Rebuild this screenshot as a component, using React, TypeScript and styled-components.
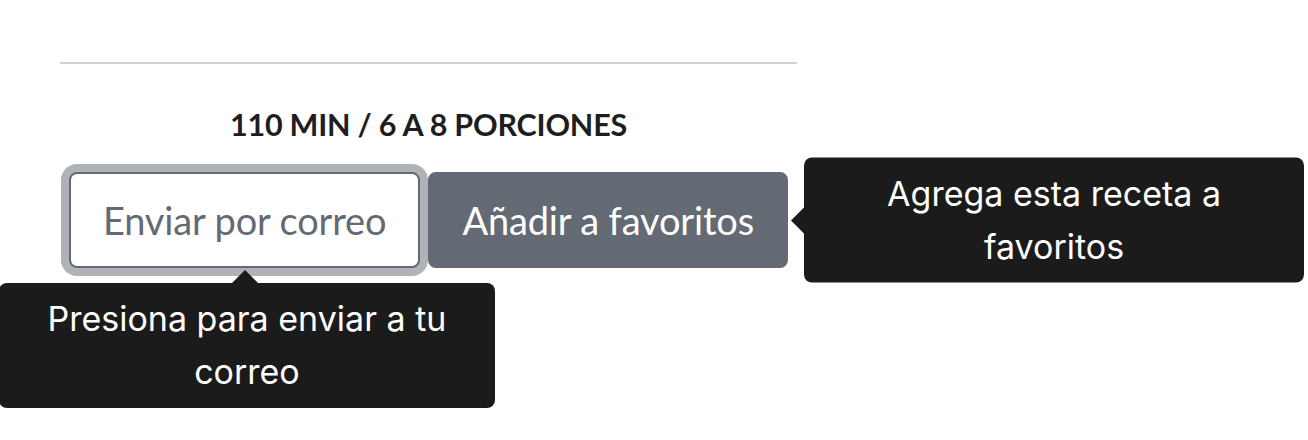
import React from "react";
import styled, { createGlobalStyle } from "styled-components";

const GlobalStyle = createGlobalStyle`
  body {
    margin: 0;
    background: #ffffff;
    font-family: "Lato", "Open Sans", sans-serif;
  }
`;

const Page = styled.div`
  box-sizing: border-box;
  width: 737px;
  min-height: 440px;
  margin-left: 60px;
  padding-top: 62px;
`;

const Divider = styled.hr`
  margin: 0;
  border: 0;
  border-top: 2px solid #d2d2d2;
`;

const Meta = styled.h2`
  margin: 40px 0 0;
  font-family: "Lato", sans-serif;
  font-weight: 700;
  font-size: 30.5px;
  line-height: 40px;
  text-align: center;
  color: #1e1e1e;
  letter-spacing: -0.2px;
`;

const ButtonRow = styled.div`
  display: flex;
  justify-content: center;
  gap: 8px;
  margin-top: 28px;
`;

const ButtonWrap = styled.div`
  position: relative;
  display: flex;
`;

const Button = styled.button<{ variant: "outline" | "solid"; focused?: boolean }>`
  height: 96px;
  padding: 0 32px;
  border-radius: 8px;
  border: 2px solid #646a73;
  font-family: "Lato", sans-serif;
  font-size: 38px;
  line-height: 1;
  letter-spacing: -0.15px;
  cursor: pointer;
  background: ${(p) => (p.variant === "solid" ? "#646a73" : "#ffffff")};
  color: ${(p) => (p.variant === "solid" ? "#ffffff" : "#646a73")};
  box-shadow: ${(p) => (p.focused ? "0 0 0 8px #afb2b7" : "none")};
`;

const Tooltip = styled.div<{ placement: "right" | "bottom" }>`
  position: absolute;
  z-index: 10;
  box-sizing: border-box;
  width: ${(p) => (p.placement === "right" ? "500px" : "496px")};
  padding: 10px 16px;
  background: #1b1b1b;
  color: #ffffff;
  border-radius: 8px;
  font-family: "Inter", "Noto Sans", sans-serif;
  font-size: 34px;
  line-height: 52.5px;
  text-align: center;
  ${(p) =>
    p.placement === "right"
      ? `
    left: calc(100% + 16px);
    top: 50%;
    transform: translateY(-50%);
  `
      : `
    top: calc(100% + 15px);
    left: -70px;
  `}

  &::before {
    content: "";
    position: absolute;
    width: 0;
    height: 0;
    ${(p) =>
      p.placement === "right"
        ? `
      left: -13px;
      top: 50%;
      margin-top: -13px;
      border-top: 13px solid transparent;
      border-bottom: 13px solid transparent;
      border-right: 13px solid #1b1b1b;
    `
        : `
      top: -13px;
      left: 246px;
      margin-left: -13px;
      border-left: 13px solid transparent;
      border-right: 13px solid transparent;
      border-bottom: 13px solid #1b1b1b;
    `}
  }
`;

export default function App() {
  return (
    <>
      <GlobalStyle />
      <Page>
        <Divider />
        <Meta>110 MIN / 6 A 8 PORCIONES</Meta>
        <ButtonRow>
          <ButtonWrap>
            <Button variant="outline" focused>
              Enviar por correo
            </Button>
            <Tooltip placement="bottom">Presiona para enviar a tu correo</Tooltip>
          </ButtonWrap>
          <ButtonWrap>
            <Button variant="solid">Añadir a favoritos</Button>
            <Tooltip placement="right">Agrega esta receta a favoritos</Tooltip>
          </ButtonWrap>
        </ButtonRow>
      </Page>
    </>
  );
}
